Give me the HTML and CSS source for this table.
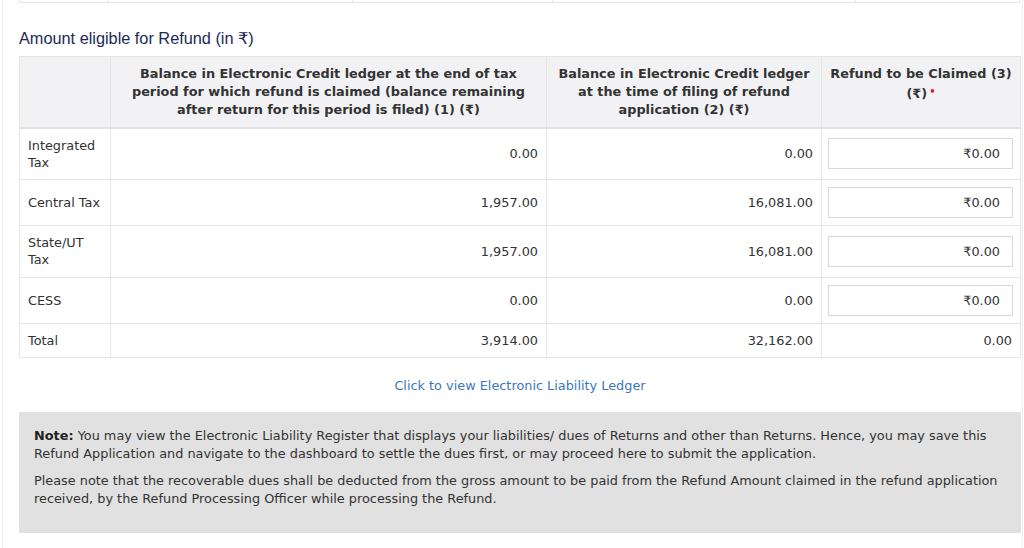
FILE: index.html
```html
<!DOCTYPE html>
<html>
<head>
<meta charset="utf-8">
<link rel="stylesheet" href="styles.css">
</head>
<body>
<div class="panel">
  <table class="prev">
    <tr><td class="p1"></td><td class="p2"></td><td class="p3"></td><td class="p4"></td><td class="p5"></td></tr>
  </table>
  <h4 class="title">Amount eligible for Refund (in ₹)</h4>
  <table class="grid">
    <thead>
      <tr>
        <th class="c1"></th>
        <th class="c2">Balance in Electronic Credit ledger at the end of tax period for which refund is claimed (balance remaining after return for this period is filed) (1) (₹)</th>
        <th class="c3">Balance in Electronic Credit ledger at the time of filing of refund application (2) (₹)</th>
        <th class="c4">Refund to be Claimed (3) (₹)<span class="req">•</span></th>
      </tr>
    </thead>
    <tbody>
      <tr class="tall first">
        <td>Integrated Tax</td><td class="num">0.00</td><td class="num">0.00</td>
        <td class="inp"><div class="box">₹0.00</div></td>
      </tr>
      <tr>
        <td>Central Tax</td><td class="num">1,957.00</td><td class="num">16,081.00</td>
        <td class="inp"><div class="box">₹0.00</div></td>
      </tr>
      <tr class="tall">
        <td>State/UT Tax</td><td class="num">1,957.00</td><td class="num">16,081.00</td>
        <td class="inp"><div class="box">₹0.00</div></td>
      </tr>
      <tr>
        <td>CESS</td><td class="num">0.00</td><td class="num">0.00</td>
        <td class="inp"><div class="box">₹0.00</div></td>
      </tr>
      <tr>
        <td>Total</td><td class="num">3,914.00</td><td class="num">32,162.00</td><td class="num">0.00</td>
      </tr>
    </tbody>
  </table>
  <div class="linkrow"><a class="link" href="#">Click to view Electronic Liability Ledger</a></div>
  <div class="note">
    <p><strong>Note:</strong> You may view the Electronic Liability Register that displays your liabilities/ dues of Returns and other than Returns. Hence, you may save this Refund Application and navigate to the dashboard to settle the dues first, or may proceed here to submit the application.</p>
    <p>Please note that the recoverable dues shall be deducted from the gross amount to be paid from the Refund Amount claimed in the refund application received, by the Refund Processing Officer while processing the Refund.</p>
  </div>
</div>
</body>
</html>
```
FILE: styles.css
```css
html, body {
  margin: 0;
  padding: 0;
  background: #fff;
}
body {
  font-family: "DejaVu Sans", Verdana, sans-serif;
  font-size: 12.85px;
  line-height: 18px;
  color: #333;
}
.panel {
  margin-left: 2px;
  width: 1021px;
  height: 548px;
  border-left: 1px solid #eeeeee;
  border-right: 1px solid #eeeeee;
  padding: 0 1px 0 16px;
  box-sizing: border-box;
}
.prev {
  width: 1001px;
  border-collapse: collapse;
  table-layout: fixed;
}
.prev td {
  height: 2px;
  padding: 0;
  border: 1px solid #e6e6e6;
  border-top: none;
  box-sizing: border-box;
}
.p1 { width: 89px; }
.p2 { width: 244px; }
.p3 { width: 200px; }
.p4 { width: 303px; }
.title {
  margin: 26px 0 9px;
  font-family: "Liberation Sans", Arial, "DejaVu Sans", sans-serif;
  font-size: 16.3px;
  font-weight: normal;
  line-height: 18px;
  color: #1b2a55;
}
.grid {
  width: 1002px;
  border-collapse: collapse;
  table-layout: fixed;
}
.grid th, .grid td {
  border: 1px solid #e6e6e6;
  padding: 8px;
  vertical-align: middle;
  box-sizing: border-box;
}
.grid th {
  background: #f2f2f5;
  font-weight: bold;
  text-align: center;
  vertical-align: top;
  border-bottom: 2px solid #e0e0e3;
}
.c1 { width: 91px; }
.c2 { width: 436px; }
.c3 { width: 275px; }
.grid td {
  text-align: left;
  line-height: 17px;
}
.grid td.num { text-align: right; }
.grid tbody tr td { height: 46px; }
.grid tbody tr.tall td { height: 52px; }
.grid tbody tr.first td { height: 50px; }
.grid tbody tr:last-child td { height: 34px; }
.grid td.inp { padding: 7px 7px 7px 6px; }
.box {
  height: 29px;
  border: 1px solid #d9d9d9;
  padding: 0 12px;
  line-height: 29px;
  text-align: right;
  background: #fff;
}
.req {
  color: #e0192b;
  font-size: 10px;
  vertical-align: 3px;
  margin-left: 2px;
}
.linkrow {
  text-align: center;
  margin: 19px 0 17px;
  line-height: 18px;
}
.link {
  color: #3b78b8;
  text-decoration: none;
}
.note {
  background: #e1e1e1;
  padding: 15px 15px 16px;
}
.note p {
  margin: 0 0 9px;
}
.note strong { color: #222; }
```
